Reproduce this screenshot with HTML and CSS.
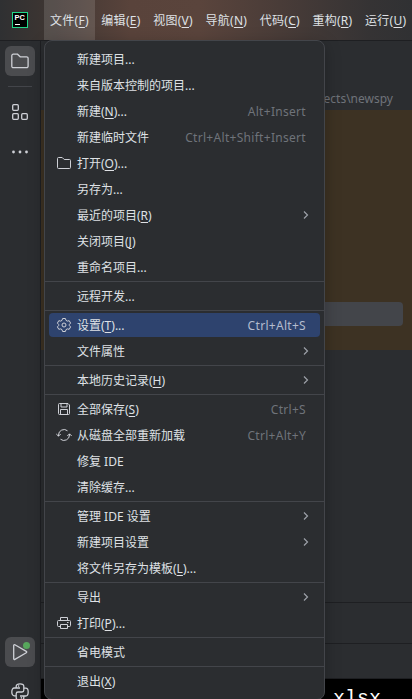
FILE: index.html
```html
<!DOCTYPE html>
<html lang="zh-CN">
<head>
    <meta charset="UTF-8">
    <meta name="viewport" content="width=device-width, initial-scale=1.0">
    <title>newspy</title>
    <link rel="stylesheet" href="styles.css">
</head>
<body>
    <header class="menubar">
        <svg class="logo" width="16" height="16" viewBox="0 0 16 16">
            <rect x="0.5" y="0.5" width="15" height="15" fill="#000" stroke="#21d789"/>
            <text class="logo-text" x="2.4" y="8.3" textLength="10.4" lengthAdjust="spacingAndGlyphs">PC</text>
            <rect x="3" y="12" width="5" height="1" fill="#fff"/>
        </svg>
        <nav class="menus">
            <span class="menu-title active">文件(<u>F</u>)</span>
            <span class="menu-title">编辑(<u>E</u>)</span>
            <span class="menu-title">视图(<u>V</u>)</span>
            <span class="menu-title">导航(<u>N</u>)</span>
            <span class="menu-title">代码(<u>C</u>)</span>
            <span class="menu-title">重构(<u>R</u>)</span>
            <span class="menu-title">运行(<u>U</u>)</span>
        </nav>
    </header>

    <div class="workspace">
        <aside class="toolbar">
            <div class="tool selected">
                <svg width="20" height="20" viewBox="0 0 20 20"><path d="M1.8 4.7a1.5 1.5 0 0 1 1.5-1.5h4.2l2.7 2.6h6.4a1.5 1.5 0 0 1 1.5 1.5v7.9a1.5 1.5 0 0 1-1.5 1.5H3.3a1.5 1.5 0 0 1-1.5-1.5z"/></svg>
            </div>
            <div class="tool-line"></div>
            <div class="tool">
                <svg width="20" height="20" viewBox="0 0 20 20"><rect x="2.7" y="2.7" width="5.6" height="5.6" rx="1"/><rect x="2.7" y="11.7" width="5.6" height="5.6" rx="1"/><rect x="11.7" y="11.7" width="5.6" height="5.6" rx="1"/></svg>
            </div>
            <div class="tool tool-more">
                <svg width="20" height="20" viewBox="0 0 20 20"><g class="solid"><circle cx="3.5" cy="10" r="1.4"/><circle cx="10" cy="10" r="1.4"/><circle cx="16.5" cy="10" r="1.4"/></g></svg>
            </div>
            <div class="tool selected tool-run">
                <svg width="20" height="20" viewBox="0 0 20 20"><path d="M3.7 3.5v13.2a.8.8 0 0 0 1.2.7l11.4-6.6a.8.8 0 0 0 0-1.4L4.9 2.8a.8.8 0 0 0-1.2.7z"/><circle class="status" cx="16.5" cy="3.5" r="3.5"/></svg>
            </div>
            <div class="tool tool-python">
                <svg width="20" height="20" viewBox="0 0 20 20"><path d="M6.2 6V4.2c0-1.4 1.4-2.4 3.8-2.4s3.8 1 3.8 2.4v4c0 1-.8 1.8-1.8 1.8H8c-1 0-1.8.8-1.8 1.8v2H4.3C2.8 13.8 1.8 12.3 1.8 10s1-4 2.5-4H10M13.8 14v1.8c0 1.4-1.4 2.4-3.8 2.4s-3.8-1-3.8-2.4v-2M13.8 6.2h1.9c1.5 0 2.5 1.5 2.5 3.8s-1 4-2.5 4H10"/><g class="solid"><circle cx="8.6" cy="4.1" r=".8"/><circle cx="11.4" cy="15.9" r=".8"/></g></svg>
            </div>
        </aside>

        <main class="content">
            <div class="path">ects\newspy</div>
            <div class="tree"><div class="tree-row"></div></div>
            <div class="blank"></div>
            <div class="panel tabs"></div>
            <div class="panel actions"></div>
            <div class="console">xlsx</div>
        </main>
    </div>

    <div class="popup">
        <div class="item"><span class="label">新建项目...</span></div>
        <div class="item"><span class="label">来自版本控制的项目...</span></div>
        <div class="item"><span class="label">新建(<u>N</u>)...</span><span class="keys">Alt+Insert</span></div>
        <div class="item"><span class="label">新建临时文件</span><span class="keys">Ctrl+Alt+Shift+Insert</span></div>
        <div class="item">
            <svg class="icon" width="16" height="16" viewBox="0 0 16 16"><path d="M1.5 3.5a1 1 0 0 1 1-1h3.7l2 2h5.3a1 1 0 0 1 1 1v7a1 1 0 0 1-1 1h-11a1 1 0 0 1-1-1z"/></svg>
            <span class="label">打开(<u>O</u>)...</span>
        </div>
        <div class="item"><span class="label">另存为...</span></div>
        <div class="item"><span class="label">最近的项目(<u>R</u>)</span><svg class="arrow" width="6" height="10" viewBox="0 0 6 10"><path d="M1 1.5l3.5 3.5-3.5 3.5"/></svg></div>
        <div class="item"><span class="label">关闭项目(<u>J</u>)</span></div>
        <div class="item"><span class="label">重命名项目...</span></div>
        <div class="separator"></div>
        <div class="item"><span class="label">远程开发...</span></div>
        <div class="separator"></div>
        <div class="item hovered">
            <svg class="icon" width="16" height="16" viewBox="0 0 16 16"><path d="M6.6 1.5h2.8l.6 1.9 1.3.7 1.9-.4 1.4 2.4L13.3 7.5v1l1.3 1.4-1.4 2.4-1.9-.4-1.3.7-.6 1.9H6.6L6 12.6l-1.3-.7-1.9.4-1.4-2.4 1.3-1.4v-1L1.4 6.1l1.4-2.4 1.9.4L6 3.4z"/><circle cx="8" cy="8" r="2"/></svg>
            <span class="label">设置(<u>T</u>)...</span><span class="keys">Ctrl+Alt+S</span>
        </div>
        <div class="item"><span class="label">文件属性</span><svg class="arrow" width="6" height="10" viewBox="0 0 6 10"><path d="M1 1.5l3.5 3.5-3.5 3.5"/></svg></div>
        <div class="separator"></div>
        <div class="item"><span class="label">本地历史记录(<u>H</u>)</span><svg class="arrow" width="6" height="10" viewBox="0 0 6 10"><path d="M1 1.5l3.5 3.5-3.5 3.5"/></svg></div>
        <div class="separator"></div>
        <div class="item">
            <svg class="icon" width="16" height="16" viewBox="0 0 16 16"><path d="M2.5 3.5a1 1 0 0 1 1-1H12L13.5 4v8.5a1 1 0 0 1-1 1h-9a1 1 0 0 1-1-1zM5 2.5V6h6V2.5M4.5 13.5v-5h7v5"/></svg>
            <span class="label">全部保存(<u>S</u>)</span><span class="keys">Ctrl+S</span>
        </div>
        <div class="item">
            <svg class="icon" width="16" height="16" viewBox="0 0 16 16"><path d="M2.5 9V8a5.5 5.5 0 0 1 9-4.2M13.5 7v1a5.5 5.5 0 0 1-9 4.2M.3 7l2.2 2.2L4.7 7M11.3 9l2.2-2.2L15.7 9"/></svg>
            <span class="label">从磁盘全部重新加载</span><span class="keys">Ctrl+Alt+Y</span>
        </div>
        <div class="item"><span class="label">修复 IDE</span></div>
        <div class="item"><span class="label">清除缓存...</span></div>
        <div class="separator"></div>
        <div class="item"><span class="label">管理 IDE 设置</span><svg class="arrow" width="6" height="10" viewBox="0 0 6 10"><path d="M1 1.5l3.5 3.5-3.5 3.5"/></svg></div>
        <div class="item"><span class="label">新建项目设置</span><svg class="arrow" width="6" height="10" viewBox="0 0 6 10"><path d="M1 1.5l3.5 3.5-3.5 3.5"/></svg></div>
        <div class="item"><span class="label">将文件另存为模板(<u>L</u>)...</span></div>
        <div class="separator"></div>
        <div class="item"><span class="label">导出</span><svg class="arrow" width="6" height="10" viewBox="0 0 6 10"><path d="M1 1.5l3.5 3.5-3.5 3.5"/></svg></div>
        <div class="item">
            <svg class="icon" width="16" height="16" viewBox="0 0 16 16"><path d="M4.5 5.5v-3h7v3M4.5 11.5h-2a1 1 0 0 1-1-1v-4a1 1 0 0 1 1-1h11a1 1 0 0 1 1 1v4a1 1 0 0 1-1 1h-2M4.5 9.5h7v4h-7zM11 7.5h1.5"/></svg>
            <span class="label">打印(<u>P</u>)...</span>
        </div>
        <div class="separator"></div>
        <div class="item"><span class="label">省电模式</span></div>
        <div class="separator"></div>
        <div class="item"><span class="label">退出(<u>X</u>)</span></div>
    </div>
</body>
</html>
```
FILE: styles.css
```css
* {
    box-sizing: border-box;
}

body {
    margin: 0;
    height: 699px;
    position: relative;
    overflow: hidden;
    background-color: #2b2d30;
    color: #dfe1e5;
    font-family: "Noto Sans", "Noto Sans CJK SC", sans-serif;
    font-size: 12px;
    line-height: 18px;
}

u {
    text-underline-offset: 2px;
    text-decoration-thickness: 1px;
}

.menubar {
    display: flex;
    align-items: center;
    height: 41px;
    padding-left: 12px;
    border-bottom: 1px solid #1e1f22;
    background: linear-gradient(90deg, #2f3032 0, #3c3532 44px, #59433b 130px, #5a443c 200px, #493c38 280px, #353334 370px, #303133 412px);
}

.logo {
    flex: none;
}

.logo-text {
    fill: #fff;
    font-family: "Liberation Sans", sans-serif;
    font-size: 7px;
    font-weight: bold;
}

.menus {
    display: flex;
    height: 40px;
    margin-left: 16px;
}

.menu-title {
    flex: none;
    padding: 0 6.6px 0 6px;
    line-height: 41px;
    letter-spacing: 0.26px;
    white-space: nowrap;
}

.menu-title.active {
    background-color: rgba(255, 255, 255, 0.13);
}

.workspace {
    display: flex;
    height: 658px;
}

.toolbar {
    display: flex;
    flex-direction: column;
    align-items: center;
    width: 41px;
    padding: 5px 1px 0 0;
    border-right: 1px solid #1e1f22;
}

.tool {
    display: flex;
    flex: none;
    align-items: center;
    justify-content: center;
    width: 30px;
    height: 30px;
    border-radius: 6px;
}

.tool.selected {
    background-color: #4b4c4f;
}

.tool svg {
    fill: none;
    stroke: #ced0d6;
    stroke-width: 1.3;
    overflow: visible;
}

.tool .solid {
    fill: #ced0d6;
    stroke: none;
}

.tool .status {
    fill: #57a75c;
    stroke: none;
}

.tool-line {
    width: 24px;
    height: 1px;
    margin: 10px 0;
    background-color: #43454a;
}

.tool-more {
    margin-top: 10px;
}

.tool-run {
    margin-top: auto;
}

.tool-python {
    margin: 10px 0 -8px;
}

.content {
    display: flex;
    flex: 1;
    flex-direction: column;
}

.path {
    height: 69px;
    padding: 49px 19px 0 0;
    color: #6f737a;
    text-align: right;
}

.tree {
    height: 240px;
    padding: 192px 9px 0 0;
    background-color: #3d3223;
}

.tree-row {
    height: 24px;
    margin-left: 100px;
    border-radius: 4px;
    background-color: #43454a;
}

.blank {
    flex: 1;
}

.panel {
    border-top: 1px solid #1e1f22;
}

.tabs {
    height: 41px;
}

.actions {
    height: 36px;
    border-bottom: 1px solid #1e1f22;
}

.console {
    height: 20px;
    padding-left: 292px;
    overflow: hidden;
    background-color: #000;
    color: #fff;
    font-family: "Liberation Mono", monospace;
    font-size: 20px;
    line-height: 40px;
}

.popup {
    position: absolute;
    top: 40px;
    left: 44px;
    display: flex;
    flex-direction: column;
    width: 281px;
    padding: 5px 0;
    border: 1px solid #43454a;
    border-radius: 8px;
    background-color: #2b2d30;
    box-shadow: 0 4px 16px rgba(0, 0, 0, 0.25);
}

.item {
    display: flex;
    align-items: center;
    height: 24px;
    margin: 1px 4px;
    padding: 0 14px 0 28px;
    border-radius: 4px;
    white-space: nowrap;
}

.item.hovered {
    background-color: #2e436e;
}

.label,
.keys {
    padding-top: 2px;
}

.icon {
    flex: none;
    margin: 0 5px 0 -21px;
    fill: none;
    stroke: #ced0d6;
}

.keys {
    margin-left: auto;
    color: #6f737a;
    letter-spacing: 0.3px;
}

.hovered .keys {
    color: #b4bcce;
}

.arrow {
    margin: 0 -3px 0 auto;
    fill: none;
    stroke: #9da0a8;
    stroke-width: 1.2;
}

.separator {
    height: 1px;
    margin: 1px 0;
    background-color: #43454a;
}
```
